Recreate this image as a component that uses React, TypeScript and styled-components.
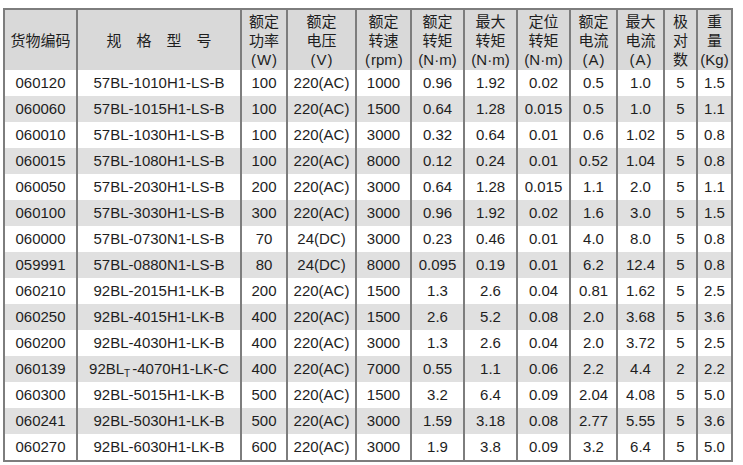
import React from "react";
import styled, { createGlobalStyle } from "styled-components";

const Global = createGlobalStyle`
  html, body { margin: 0; padding: 0; background: #ffffff; }
  body { font-family: "Liberation Sans", "Noto Sans CJK SC", sans-serif; }
`;

const Page = styled.div`
  padding: 8px 0 0 3px;
`;

const Table = styled.table`
  border-collapse: separate;
  border-spacing: 0;
  table-layout: fixed;
  width: 730px;
  border: 2px solid #7d7d7d;
  color: #1e1e1e;
  font-family: "Liberation Sans", "Noto Sans CJK SC", sans-serif;
`;

const HeadCell = styled.th<{ $w: number; $last?: boolean }>`
  box-sizing: border-box;
  width: ${(p) => p.$w}px;
  height: 60px;
  padding: 0;
  background: #d9d9d9;
  border-right: ${(p) => (p.$last ? "none" : "2px solid #7d7d7d")};
  font-weight: normal;
  font-size: 15px;
  line-height: 19px;
  text-align: center;
  vertical-align: middle;
  white-space: nowrap;
`;

const WideParen = styled.span<{ $side: "open" | "close" }>`
  display: inline-block;
  width: 14px;
  text-align: ${(p) => (p.$side === "open" ? "right" : "left")};
  padding: 0 1px;
  box-sizing: border-box;
`;

const Row = styled.tr<{ $alt: boolean }>`
  background: ${(p) => (p.$alt ? "#e0e0e0" : "#ffffff")};
`;

const Cell = styled.td<{ $last?: boolean }>`
  box-sizing: border-box;
  height: 26px;
  padding: 0;
  border-right: ${(p) => (p.$last ? "none" : "2px solid #7d7d7d")};
  font-size: 15px;
  line-height: 26px;
  text-align: center;
  white-space: nowrap;
`;

const Sub = styled.span`
  font-size: 10px;
  vertical-align: -3px;
  line-height: 0;
  margin-right: 2px;
`;

const widths = [73, 164, 46, 69, 55, 53, 53, 53, 47, 47, 33, 33];

const Unit = ({ u }: { u: string }) => (
  <>
    <WideParen $side="open">(</WideParen>
    {u}
    <WideParen $side="close">)</WideParen>
  </>
);

const headers: React.ReactNode[] = [
  "货物编码",
  "规　格　型　号",
  ["额定", "功率", <Unit u="W" />],
  ["额定", "电压", <Unit u="V" />],
  ["额定", "转速", <Unit u="rpm" />],
  ["额定", "转矩", "(N·m)"],
  ["最大", "转矩", "(N·m)"],
  ["定位", "转矩", "(N·m)"],
  ["额定", "电流", <Unit u="A" />],
  ["最大", "电流", <Unit u="A" />],
  ["极", "对", "数"],
  ["重", "量", "(Kg)"],
];

const rows: string[][] = [
  ["060120", "57BL-1010H1-LS-B", "100", "220(AC)", "1000", "0.96", "1.92", "0.02", "0.5", "1.0", "5", "1.5"],
  ["060060", "57BL-1015H1-LS-B", "100", "220(AC)", "1500", "0.64", "1.28", "0.015", "0.5", "1.0", "5", "1.1"],
  ["060010", "57BL-1030H1-LS-B", "100", "220(AC)", "3000", "0.32", "0.64", "0.01", "0.6", "1.02", "5", "0.8"],
  ["060015", "57BL-1080H1-LS-B", "100", "220(AC)", "8000", "0.12", "0.24", "0.01", "0.52", "1.04", "5", "0.8"],
  ["060050", "57BL-2030H1-LS-B", "200", "220(AC)", "3000", "0.64", "1.28", "0.015", "1.1", "2.0", "5", "1.1"],
  ["060100", "57BL-3030H1-LS-B", "300", "220(AC)", "3000", "0.96", "1.92", "0.02", "1.6", "3.0", "5", "1.5"],
  ["060000", "57BL-0730N1-LS-B", "70", "24(DC)", "3000", "0.23", "0.46", "0.01", "4.0", "8.0", "5", "0.8"],
  ["059991", "57BL-0880N1-LS-B", "80", "24(DC)", "8000", "0.095", "0.19", "0.01", "6.2", "12.4", "5", "0.8"],
  ["060210", "92BL-2015H1-LK-B", "200", "220(AC)", "1500", "1.3", "2.6", "0.04", "0.81", "1.62", "5", "2.5"],
  ["060250", "92BL-4015H1-LK-B", "400", "220(AC)", "1500", "2.6", "5.2", "0.08", "2.0", "3.68", "5", "3.6"],
  ["060200", "92BL-4030H1-LK-B", "400", "220(AC)", "3000", "1.3", "2.6", "0.04", "2.0", "3.72", "5", "2.5"],
  ["060139", "92BL_T-4070H1-LK-C", "400", "220(AC)", "7000", "0.55", "1.1", "0.06", "2.2", "4.4", "2", "2.2"],
  ["060300", "92BL-5015H1-LK-B", "500", "220(AC)", "1500", "3.2", "6.4", "0.09", "2.04", "4.08", "5", "5.0"],
  ["060241", "92BL-5030H1-LK-B", "500", "220(AC)", "3000", "1.59", "3.18", "0.08", "2.77", "5.55", "5", "3.6"],
  ["060270", "92BL-6030H1-LK-B", "600", "220(AC)", "3000", "1.9", "3.8", "0.09", "3.2", "6.4", "5", "5.0"],
];

function renderModel(text: string) {
  if (text.includes("_T")) {
    const [a, b] = text.split("_T");
    return (
      <>
        {a}
        <Sub>T</Sub>
        {b}
      </>
    );
  }
  return text;
}

export default function App() {
  return (
    <>
      <Global />
      <Page>
        <Table>
          <thead>
            <tr>
              {headers.map((h, i) => (
                <HeadCell key={i} $w={widths[i]} $last={i === headers.length - 1}>
                  {Array.isArray(h)
                    ? h.map((line, j) => (
                        <React.Fragment key={j}>
                          {j > 0 && <br />}
                          {line}
                        </React.Fragment>
                      ))
                    : h}
                </HeadCell>
              ))}
            </tr>
          </thead>
          <tbody>
            {rows.map((r, i) => (
              <Row key={i} $alt={i % 2 === 1}>
                {r.map((v, j) => (
                  <Cell key={j} $last={j === r.length - 1}>
                    {j === 1 ? renderModel(v) : v}
                  </Cell>
                ))}
              </Row>
            ))}
          </tbody>
        </Table>
      </Page>
    </>
  );
}
